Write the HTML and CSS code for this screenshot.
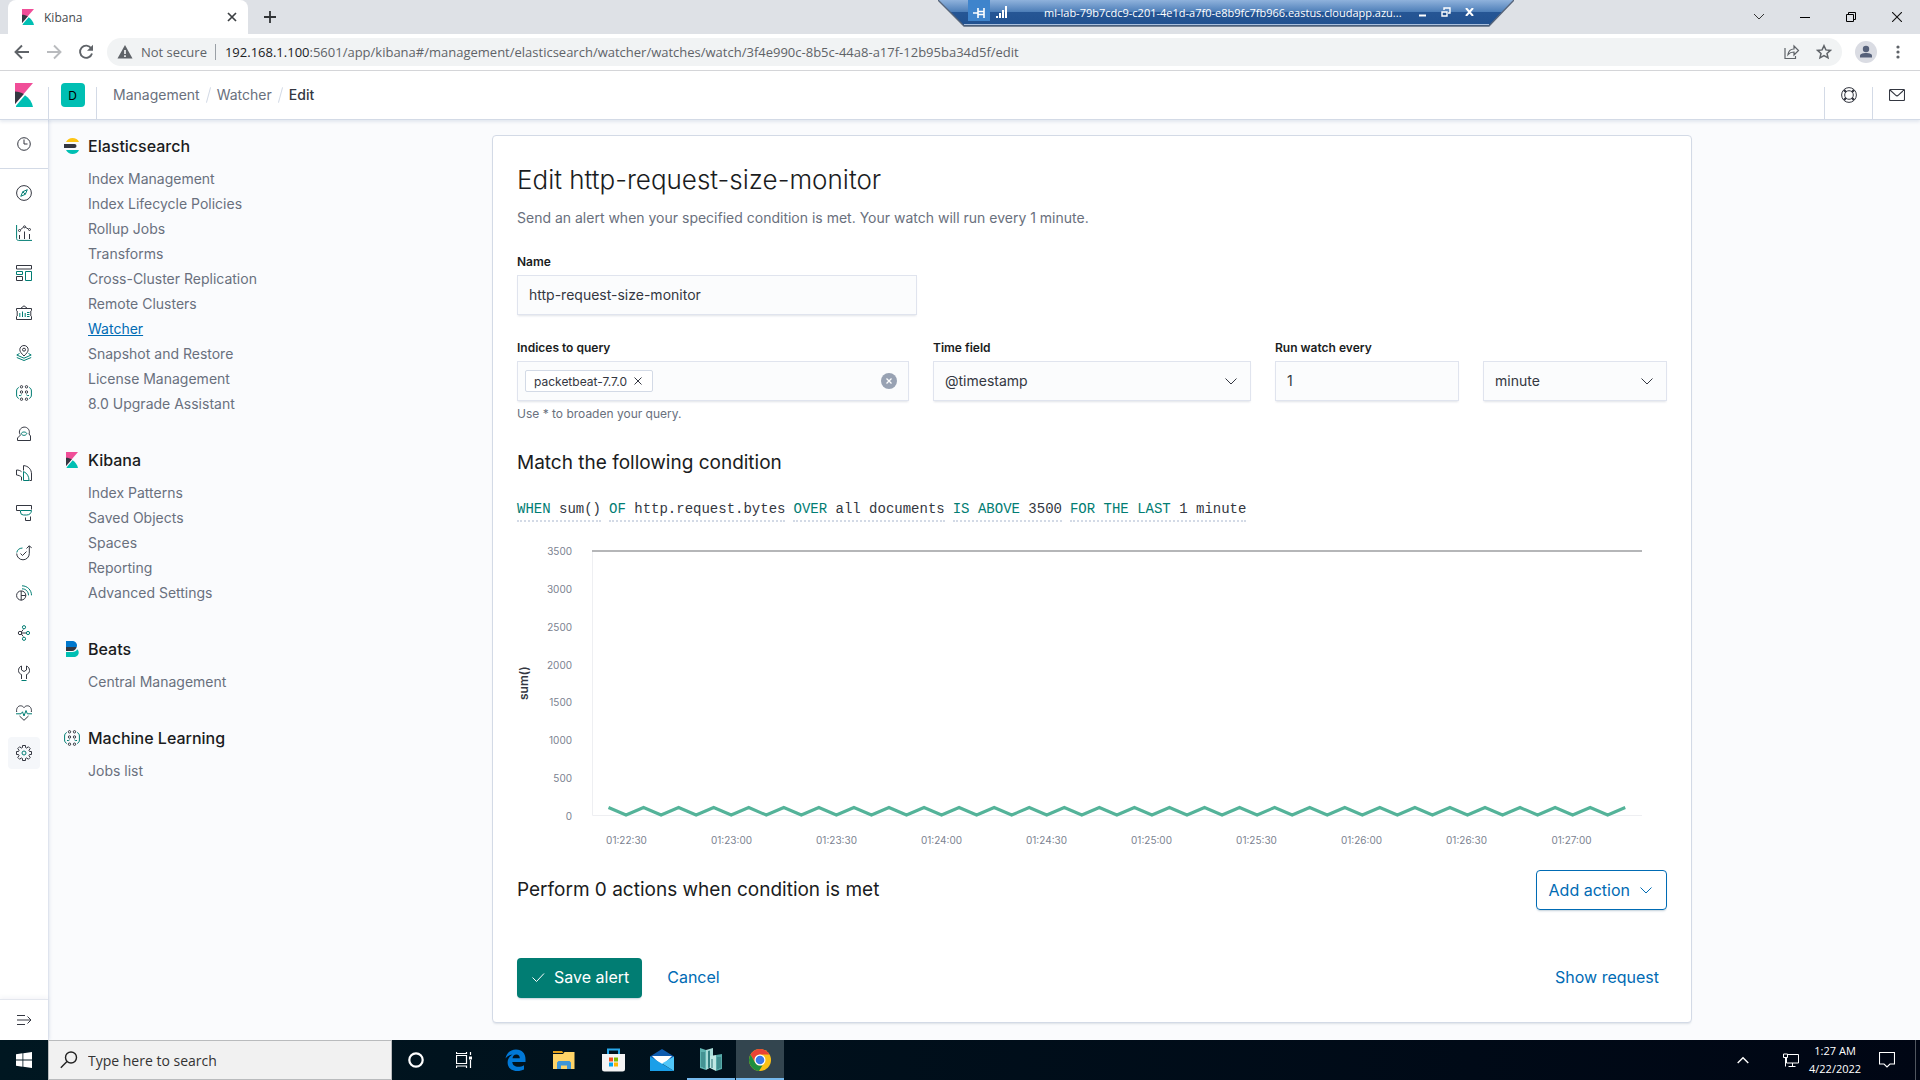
FILE: index.html
```html
<!DOCTYPE html>
<html lang="en">
<head>
<meta charset="utf-8">
<title>Kibana</title>
<link rel="stylesheet" href="styles.css">
</head>
<body>
<svg class="defs" aria-hidden="true">
  <symbol id="kibana" viewBox="0 0 18 24"><path fill="#f04e98" d="M0 0h18L0 21z"/><path fill="#343741" d="M0 8.500c3.200 0 6.200.9 8.800 2.400L0 21z"/><path fill="#00bfb3" d="M10 12.200 1 22.700V24h17c-.9-4.900-3.900-9.100-8-11.800z"/></symbol>
  <symbol id="chev" viewBox="0 0 16 16"><path d="M2.500 5.500 8 11l5.500-5.500" fill="none" stroke="currentColor"/></symbol>
  <symbol id="ml" viewBox="0 0 16 16"><g fill="none" stroke="#343741"><circle cx="5.500" cy="1.800" r="1.200"/><circle cx="10.500" cy="1.800" r="1.200"/><circle cx="5.500" cy="7" r="1.200"/><circle cx="10.500" cy="7" r="1.200"/><circle cx="5.500" cy="14.200" r="1.200"/><circle cx="10.500" cy="14.200" r="1.200"/></g><path fill="none" stroke="#017d73" d="M2.800 2.500C1.200 3.200.6 4.400.6 6v4c0 1.600.7 2.800 2.200 3.500M13.200 2.500c1.600.7 2.200 1.900 2.200 3.500v4c0 1.600-.7 2.800-2.200 3.500M3 10.500h1.700l1-.8M13 10.500h-1.700l-1-.8"/></symbol>
</svg>

<div class="tabstrip">
  <div class="tab">
    <svg class="fav"><use href="#kibana"/></svg>
    <span class="tab-name">Kibana</span>
    <button class="plain" aria-label="Close tab"><svg width="10" height="10" viewBox="0 0 10 10"><path d="m1 1 8 8M9 1 1 9" stroke="#3c4043" stroke-width="1.700"/></svg></button>
  </div>
  <button class="plain newtab" aria-label="New tab"><svg width="12" height="12" viewBox="0 0 12 12"><path d="M6 0v12M0 6h12" stroke="#303336" stroke-width="1.800"/></svg></button>
  <div class="winbtns">
    <button class="plain" aria-label="Search tabs"><svg width="12" height="12" viewBox="0 0 12 12"><path d="m1 3 5 5 5-5" fill="none" stroke="#333"/></svg></button>
    <button class="plain" aria-label="Minimize"><svg width="10" height="10" viewBox="0 0 10 10"><path d="M0 5.500h10" stroke="#000"/></svg></button>
    <button class="plain" aria-label="Restore"><svg width="10" height="10" viewBox="0 0 10 10"><path d="M.5 2.500h7v7h-7zM2.500 2V.5h7v7H8" fill="none" stroke="#000"/></svg></button>
    <button class="plain" aria-label="Close"><svg width="10" height="10" viewBox="0 0 10 10"><path d="m0 0 10 10M10 0 0 10" stroke="#111" stroke-width="1.100"/></svg></button>
  </div>
</div>

<div class="rdp">
  <svg class="rdp-shape" viewBox="0 0 576 27"><defs><linearGradient id="rg" x2="0" y2="1"><stop offset="0" stop-color="#8fb2dc"/><stop offset=".46" stop-color="#4d7eb8"/><stop offset=".46" stop-color="#265695"/><stop offset="1" stop-color="#20508f"/></linearGradient></defs><path d="M0 0h576l-25 26H26z" fill="url(#rg)"/><path d="M26 24.500h525" stroke="#a9bfdd" stroke-width="1"/><path d="m0 0 26 26h525l25-26" fill="none" stroke="#56647a" stroke-width="1.300"/></svg>
  <div class="rdp-row">
    <button class="plain pin" aria-label="Pin"><svg width="12" height="10" viewBox="0 0 12 10"><path d="M0 5h5M5 0v10M11 0v10M5 3.500h6M5 6.500h6" stroke="#fff" stroke-width="1.600"/></svg></button>
    <svg width="12" height="12" viewBox="0 0 12 12" fill="#fff"><path d="M0 10h2v2H0zM3 7h2v5H3zM6 4h2v8H6zM9 0h2v12H9z"/></svg>
    <span class="rdp-name">ml-lab-79b7cdc9-c201-4e1d-a7f0-e8b9fc7fb966.eastus.cloudapp.azu...</span>
    <button class="plain" aria-label="Minimize session"><svg width="9" height="10" viewBox="0 0 9 10"><path d="M1 8.500h7" stroke="#fff" stroke-width="2"/></svg></button>
    <button class="plain" aria-label="Restore session"><svg width="10" height="10" viewBox="0 0 10 10"><path d="M1 5h5v4H1zM3 3V1h6v5H7" fill="none" stroke="#fff" stroke-width="1.400"/></svg></button>
    <button class="plain" aria-label="Close session"><svg width="9" height="8" viewBox="0 0 9 8"><path d="m1 0 7 8M8 0 1 8" stroke="#fff" stroke-width="2"/></svg></button>
  </div>
</div>

<div class="toolbar">
  <div class="nav">
    <button class="plain" aria-label="Back"><svg width="16" height="16" viewBox="0 0 16 16"><path d="M15 8H2M8 1.500 1.500 8 8 14.500" fill="none" stroke="#5f6368" stroke-width="1.900"/></svg></button>
    <button class="plain" aria-label="Forward"><svg width="16" height="16" viewBox="0 0 16 16"><path d="M1 8h13M8 1.500 14.500 8 8 14.500" fill="none" stroke="#b9bbbe" stroke-width="1.900"/></svg></button>
    <button class="plain" aria-label="Reload"><svg width="16" height="16" viewBox="0 0 16 16"><path d="M13.200 4.300A6.100 6.100 0 1 0 14 9.500" fill="none" stroke="#5f6368" stroke-width="1.900"/><path d="M15 .8v6H9z" fill="#5f6368"/></svg></button>
  </div>
  <div class="pill">
    <svg width="16" height="14" viewBox="0 0 16 14"><path d="M8 0 .5 13.500h15z" fill="#5f6368"/><path d="M8 5v4M8 10.300v1.700" stroke="#f1f3f4" stroke-width="1.700"/></svg>
    <span class="notsec">Not secure</span>
    <span class="url"><b>192.168.1.100</b>:5601/app/kibana#/management/elasticsearch/watcher/watches/watch/3f4e990c-8b5c-44a8-a17f-12b95ba34d5f/edit</span>
    <svg width="16" height="16" viewBox="0 0 16 16"><path d="M1 4v10.500h10.500V12M4 10.500C4.500 7 6.500 5 10 5V2l4.500 4.500L10 11V8C7.500 8 5.500 8.800 4 10.500z" fill="none" stroke="#5f6368" stroke-width="1.200"/></svg>
    <svg width="16" height="16" viewBox="0 0 16 16"><path d="m8 1.700 1.900 4.200 4.500.5L11 9.400l1 4.400L8 11.500l-4 2.300 1-4.400-3.400-3 4.500-.5z" fill="none" stroke="#5f6368" stroke-width="1.500"/></svg>
  </div>
  <svg width="22" height="22" viewBox="0 0 22 22"><circle cx="11" cy="11" r="11" fill="#dadce3"/><circle cx="11" cy="8" r="3.200" fill="#56617a"/><path d="M5 16.500v-1.800C5 12.800 8 12 11 12s6 .8 6 2.700v1.800z" fill="#56617a"/></svg>
  <button class="plain" aria-label="Menu"><svg width="16" height="16" viewBox="0 0 16 16" fill="#5f6368"><circle cx="8" cy="3" r="1.600"/><circle cx="8" cy="8" r="1.600"/><circle cx="8" cy="13" r="1.600"/></svg></button>
</div>

<header class="khead">
  <a href="#" class="klogo" aria-label="Home"><svg width="18" height="24"><use href="#kibana"/></svg></a>
  <div class="kcell"><button class="space">D</button></div>
  <nav class="crumbs"><a href="#">Management</a><i></i><a href="#">Watcher</a><i></i><span>Edit</span></nav>
  <button class="plain kcell" aria-label="Help"><svg width="16" height="16" viewBox="0 0 16 16"><g fill="none" stroke="#343741"><circle cx="8" cy="8" r="7.400"/><circle cx="8" cy="8" r="4.300"/><path d="m3 3 2 2M13 3l-2 2M3 13l2-2M13 13l-2-2" stroke-width="2.400"/></g></svg></button>
  <button class="plain kcell" aria-label="News"><svg width="16" height="12" viewBox="0 0 16 12"><path d="M1.500.5h13a1 1 0 0 1 1 1v9a1 1 0 0 1-1 1h-13a1 1 0 0 1-1-1v-9a1 1 0 0 1 1-1zM1 1l5.600 5.200a2 2 0 0 0 2.800 0L15 1" fill="none" stroke="#343741" stroke-width="1.100"/></svg></button>
</header>

<div class="app">
  <nav class="rail">
    <a href="#" class="recent" aria-label="Recently viewed"><svg viewBox="0 0 16 16"><path d="M8 3.500V8h3.500"/><circle cx="8" cy="8" r="6.300"/></svg></a>
    <div class="rail-list">
      <a href="#" aria-label="Discover"><svg viewBox="0 0 16 16"><circle cx="8" cy="8" r="7.400"/><path class="t" d="m11.300 4.700-4.500 2-2 4.600 4.500-2zM6.800 6.700l2.500 2.600"/></svg></a>
      <a href="#" aria-label="Visualize"><svg viewBox="0 0 16 16"><path class="t" d="M.6 0v13.500c0 1.200.7 1.900 1.900 1.900H16"/><path d="M3.500 10v4M8.500 6.500V14M13.500 9v5M4.300 4.800l3.200-2.600M9.300 2.200l3.200 1.900"/><circle cx="3.500" cy="5.500" r="1"/><circle cx="8.500" cy="1.800" r="1"/><circle cx="13.500" cy="4.500" r="1"/></svg></a>
      <a href="#" aria-label="Dashboard"><svg viewBox="0 0 16 16"><path d="M.5.500h15v3.500H.5zM.5 11.500h6v4h-6z"/><path class="t" d="M.5 6.500h6v3h-6zM9.500 6.500h6v9h-6z"/></svg></a>
      <a href="#" aria-label="Canvas"><svg viewBox="0 0 16 16"><path d="M.5 3.500h15v2l-.7.500v5l.7.500v3H.5v-3l.7-.5V6l-.7-.5zM4.500 3.500 8 .8l3.500 2.700"/><path class="t" d="M3.800 8v4M6.500 6.500V12M9.200 8v4M11 7.500h2.500M11 9.500h2.500M11 11.500h2.500"/></svg></a>
      <a href="#" aria-label="Maps"><svg viewBox="0 0 16 16"><path d="M8 11C5.500 8.500 3.800 6.700 3.800 4.700a4.200 4.200 0 0 1 8.400 0C12.200 6.700 10.500 8.500 8 11z"/><circle cx="8" cy="4.700" r="1.500"/><path class="t" d="M3.500 8.500.8 10 8 13.200 15.200 10l-2.700-1.500M.8 12.500 8 15.500l7.200-3"/></svg></a>
      <a href="#" aria-label="Machine Learning"><svg><use href="#ml"/></svg></a>
      <a href="#" aria-label="Metrics"><svg viewBox="0 0 16 16"><path d="M4 9.500A5 5 0 1 1 13 9l1.500 2v4.500h-13V13L5 9.500"/><path class="t" d="M5.300 8.500C6 6.500 10 6.500 10.800 8.500 10 11 6 11 5.300 8.500z"/></svg></a>
      <a href="#" aria-label="Logs"><svg viewBox="0 0 16 16"><path d="M5.500 15.500V12C4 10.800 2.500 10.200.5 10V5c2 0 3.700.5 5 1.700M7.500 5.500V.6c4.800.3 8 3.700 8 8.400v6.500h-2"/><path class="t" d="M7.500 6.500v9h5.500c0-4-1.700-7.300-5.500-9z"/></svg></a>
      <a href="#" aria-label="APM"><svg viewBox="0 0 16 16"><path d="M4 5.500H.5v-5h15v4M9.500 12.500v3h5v-4"/><path class="t" d="M4.500 5.500h11c-.3 3-2.200 4.500-5 4.500h-3a3 3 0 0 1-3-3z"/></svg></a>
      <a href="#" aria-label="Uptime"><svg viewBox="0 0 16 16"><path d="M.7 8.500a6.300 6.300 0 0 0 12.600 0V1M10.500 3.500 13.300.7l2.500 2.500M4.500 8.500 6.500 10.500l4-4"/><path class="t" d="M.8 7.500C1.300 5 3 3.200 6.500 3"/></svg></a>
      <a href="#" aria-label="SIEM"><svg viewBox="0 0 16 16"><circle cx="5.200" cy="10.500" r="4.600"/><path d="M5.200 6v9.400M5.200 10.500h4.500"/><path class="t" d="M6 3.800c4 0 6.500 3 6.500 6.500M6 .8c5.500 0 9.500 4.400 9.500 9.500"/></svg></a>
      <a href="#" aria-label="Graph"><svg viewBox="0 0 16 16"><circle cx="4" cy="8" r="1.700"/><path d="M5.700 8h5M5.300 7l2-2.500M5.300 9l2 2.500"/><g class="t"><circle cx="8" cy="2.200" r="1.600"/><circle cx="12" cy="8" r="1.600"/><circle cx="8" cy="13.800" r="1.600"/></g></svg></a>
      <a href="#" aria-label="Dev Tools"><svg viewBox="0 0 16 16"><path d="M5.500 1C3.500 1.800 2.500 3.500 2.500 5.500s1 3.200 3 4V14M10.500 1c2 .8 3 2.500 3 4.500s-1 3.200-3 4V14M5.500 1v4L8 6.500 10.500 5V1"/><path class="t" d="M5.500 15.500h5"/></svg></a>
      <a href="#" aria-label="Stack Monitoring"><svg viewBox="0 0 16 16"><path d="M.7 7C0 3.500 2 .8 4.500.8 6 .8 7.200 1.500 8 2.600 8.800 1.500 10 .8 11.500.8c2.500 0 4.500 2.700 3.800 6.200M3.500 11 8 15.300 12.500 11"/><path class="t" d="M0 8.800h5l1.500-2L8 11l2-5.500 1.300 3.300H16"/></svg></a>
      <a href="#" class="on" aria-label="Management"><svg viewBox="0 0 16 16"><path d="M6.500.5h3v2l1.300.6L12.300 1.700l2 2-1.400 1.500.6 1.300h2v3h-2l-.6 1.300 1.400 1.500-2 2-1.500-1.400-1.300.6v2h-3v-2l-1.300-.6-1.500 1.400-2-2 1.400-1.500-.6-1.300h-2v-3h2l.6-1.300-1.400-1.500 2-2 1.500 1.400 1.300-.6z"/><circle class="t" cx="8" cy="8" r="2"/></svg></a>
    </div>
    <a href="#" class="expand" aria-label="Expand"><svg viewBox="0 0 16 16"><path d="M1 3.500h8M1 8h14M1 12.500h8M11.500 4.500 15 8l-3.500 3.500"/></svg></a>
  </nav>

  <nav class="side">
    <h2><svg viewBox="0 0 16 16"><path fill="#fec514" d="M2 4C3.500 1.500 5.700 0 8.500 0 11.500 0 14 1.500 15 4z"/><path fill="#343741" d="M0 6h10.500a2 2 0 0 1 0 4H0z"/><path fill="#00bfb3" d="M2 12h13c-1 2.500-3.500 4-6.500 4C5.700 16 3.500 14.500 2 12z"/></svg>Elasticsearch</h2>
    <ul>
      <li><a href="#">Index Management</a></li><li><a href="#">Index Lifecycle Policies</a></li><li><a href="#">Rollup Jobs</a></li><li><a href="#">Transforms</a></li><li><a href="#">Cross-Cluster Replication</a></li><li><a href="#">Remote Clusters</a></li><li><a href="#" class="cur">Watcher</a></li><li><a href="#">Snapshot and Restore</a></li><li><a href="#">License Management</a></li><li><a href="#">8.0 Upgrade Assistant</a></li>
    </ul>
    <h2><svg><use href="#kibana"/></svg>Kibana</h2>
    <ul>
      <li><a href="#">Index Patterns</a></li><li><a href="#">Saved Objects</a></li><li><a href="#">Spaces</a></li><li><a href="#">Reporting</a></li><li><a href="#">Advanced Settings</a></li>
    </ul>
    <h2><svg viewBox="0 0 16 16"><path fill="#0077cc" d="M2 0h6c3 0 5 2 5 4.500 0 .6-.1 1-.3 1.500H2z"/><path fill="#343741" d="M2 6h10.700c-.7 2-2.300 4-4.700 4H2z"/><path fill="#00bfb3" d="M2 11h6.500c2.200 0 3.800-1 4.700-2.700 1 .8 1.500 2 1.500 3.200 0 2.500-2 4.500-5 4.500H2z"/></svg>Beats</h2>
    <ul><li><a href="#">Central Management</a></li></ul>
    <h2><svg><use href="#ml"/></svg>Machine Learning</h2>
    <ul><li><a href="#">Jobs list</a></li></ul>
  </nav>

  <main class="main">
    <form class="panel">
      <h1>Edit http-request-size-monitor</h1>
      <p class="sub">Send an alert when your specified condition is met. Your watch will run every 1 minute.</p>
      <div class="field name"><label for="name">Name</label><input class="ctl" id="name" value="http-request-size-monitor"></div>
      <div class="row">
        <div class="field">
          <label for="idx">Indices to query</label>
          <div class="ctl combo">
            <span class="badge">packetbeat-7.7.0<button type="button" class="plain" aria-label="Remove packetbeat-7.7.0"><svg width="8" height="8" viewBox="0 0 8 8"><path d="m.5.500 7 7M7.500.500l-7 7" stroke="#343741"/></svg></button></span>
            <input id="idx">
            <button type="button" class="plain" aria-label="Clear"><svg width="16" height="16" viewBox="0 0 16 16"><circle cx="8" cy="8" r="8" fill="#98a2b3"/><path d="m5.500 5.500 5 5M10.500 5.500l-5 5" stroke="#fff" stroke-width="1.300"/></svg></button>
          </div>
          <p class="help">Use * to broaden your query.</p>
        </div>
        <div class="field"><label for="time">Time field</label><div class="sel"><select class="ctl" id="time"><option>@timestamp</option></select><svg><use href="#chev"/></svg></div></div>
        <div class="field"><label for="every">Run watch every</label><input class="ctl" id="every" value="1"></div>
        <div class="field bottomless"><div class="sel"><select class="ctl" aria-label="Unit"><option>minute</option></select><svg><use href="#chev"/></svg></div></div>
      </div>
      <h2>Match the following condition</h2>
      <div class="expr">
        <button type="button"><b>WHEN</b> sum()</button><button type="button"><b>OF</b> http.request.bytes</button><button type="button"><b>OVER</b> all documents</button><button type="button"><b>IS ABOVE</b> 3500</button><button type="button"><b>FOR THE LAST</b> 1 minute</button>
      </div>
      <div class="chart">
        <div class="ytitle">sum()</div>
        <div class="ylab"><span>3500</span><span>3000</span><span>2500</span><span>2000</span><span>1500</span><span>1000</span><span>500</span><span>0</span></div>
        <svg class="plot" viewBox="0 0 1050 265" preserveAspectRatio="none"><g fill="none"><path d="M.5 0v264.500H1050" stroke="#eeeff2" vector-effect="non-scaling-stroke"/><path d="M0 0h1050" stroke="#b5b6b8" stroke-width="2" vector-effect="non-scaling-stroke"/><path id="series" stroke="#54b399" stroke-width="3" vector-effect="non-scaling-stroke"/></g></svg>
        <div class="xlab"><span>01:22:30</span><span>01:23:00</span><span>01:23:30</span><span>01:24:00</span><span>01:24:30</span><span>01:25:00</span><span>01:25:30</span><span>01:26:00</span><span>01:26:30</span><span>01:27:00</span></div>
      </div>
      <div class="actions">
        <h2>Perform 0 actions when condition is met</h2>
        <button type="button" class="btn outline">Add action<svg><use href="#chev"/></svg></button>
      </div>
      <div class="foot">
        <button type="button" class="btn fill"><svg viewBox="0 0 16 16"><path d="m2.500 8.500 4 4 7.500-8" fill="none" stroke="#fff"/></svg>Save alert</button>
        <button type="button" class="btn link">Cancel</button>
        <button type="button" class="btn link last">Show request</button>
      </div>
    </form>
  </main>
</div>

<footer class="taskbar">
  <button class="plain start" aria-label="Start"><svg width="16" height="16" viewBox="0 0 16 16" fill="#fff"><path d="M0 2.200 6.500 1.300V7.600H0zM7.300 1.200 16 0v7.600H7.300zM0 8.400h6.500v6.300L0 13.800zM7.300 8.400H16V16l-8.700-1.200z"/></svg></button>
  <label class="search"><svg width="18" height="18" viewBox="0 0 18 18"><g fill="none" stroke="#222" stroke-width="1.400"><circle cx="11" cy="6.500" r="5.500"/><path d="M7 10.500.8 16.800"/></g></svg><input placeholder="Type here to search" aria-label="Search"></label>
  <button class="plain tb" aria-label="Cortana"><svg width="16" height="16" viewBox="0 0 16 16"><circle cx="8" cy="8" r="6.700" fill="none" stroke="#fff" stroke-width="2.200"/></svg></button>
  <button class="plain tb" aria-label="Task View"><svg width="16" height="16" viewBox="0 0 16 16"><path d="M.5 3.500h10v8H.5zM.5 0v1.500h10V0M.5 16v-2h10v2M14.500 0v3M14.500 8v8" fill="none" stroke="#fff" stroke-width="1.200"/><path d="M13 4.500h3v3h-3z" fill="#fff"/></svg></button>
  <div class="apps">
    <button class="plain tb" aria-label="Edge"><svg width="21" height="22" viewBox="0 0 21 22"><path fill="#0078d7" d="M.5 9.500C1.500 4 5.500.5 11 .5c6 0 9.500 4 9.500 9.500v3H7.300c.2 3.200 2.700 4.800 6 4.800 2.200 0 4-.6 5.700-1.600v4.300c-1.700.9-4 1.500-6.800 1.500-6 0-9.600-3.500-9.600-8.500 0-3.500 2-6.500 5-8C4.500 6 2 7.200.5 9.500zM7.500 9.300h7.300c0-2.300-1.200-3.800-3.500-3.800-2.200 0-3.500 1.600-3.800 3.800z"/></svg></button>
    <button class="plain tb" aria-label="File Explorer"><svg width="22" height="18" viewBox="0 0 22 18"><path fill="#e3a01b" d="M0 0h9l1.500 2H0z"/><path fill="#ffd467" d="M0 3h10l1.500-2H21.500v17H0z"/><path fill="#3f96d8" d="M4 18v-6.500L5.500 10h11L18 11.500V18h-4v-3.500H8V18z"/></svg></button>
    <button class="plain tb" aria-label="Store"><svg width="23" height="24" viewBox="0 0 23 24"><path d="M6 6V1.500h11V6" fill="none" stroke="#28a8ea" stroke-width="2"/><path fill="#f4f4f4" d="M0 6h23v15a2.500 2.500 0 0 1-2.500 2.500h-18A2.500 2.500 0 0 1 0 21z"/><path fill="#f25022" d="M7 9.500h4v4H7z"/><path fill="#7fba00" d="M12 9.500h4v4h-4z"/><path fill="#00a4ef" d="M7 14.500h4v4H7z"/><path fill="#ffb900" d="M12 14.500h4v4h-4z"/></svg></button>
    <button class="plain tb" aria-label="Mail"><svg width="24" height="22" viewBox="0 0 24 22"><path fill="#0d5bae" d="M0 7.500 12 0l12 7.500V12H0z"/><path fill="#fff" d="M2 7h20l-8 8h-4z"/><path fill="#1a9fe8" d="M0 7.500 24 22H0z"/><path fill="#4fc6f8" d="M24 7.500V22L12 14.500z"/></svg></button>
    <button class="plain tb under" aria-label="Server Manager"><svg width="24" height="24" viewBox="0 0 24 24"><path fill="#5fb3b0" d="m1 0 6 2v20l-6-2z"/><path fill="#a9dcd8" d="m7 2 7-2v18l-7 4z"/><path fill="#347f80" d="m9 3 2-.5v17L9 20z"/><path fill="#bfe8e4" d="m11 8 6-1v16l-6-3z"/><path fill="#57aaa8" d="m17 7 6-1v15l-6 2z"/><path stroke="#2b7376" d="M3 4v15M5 4v16M13 11v9M19 9v12M21 9v11"/></svg></button>
    <button class="plain tb active under" aria-label="Chrome"><svg width="22" height="22" viewBox="0 0 22 22"><circle cx="11" cy="11" r="11" fill="#fbc116"/><path fill="#ea4335" d="M1.500 5.500a11 11 0 0 1 19 0H11a5.500 5.500 0 0 0-4.800 8.200z"/><path fill="#1e8e3e" d="M1.500 5.500 6.200 13.700A5.500 5.500 0 0 0 11 16.500h2.500L10 22A11 11 0 0 1 1.500 5.500z"/><circle cx="11" cy="11" r="5.500" fill="#fff"/><circle cx="11" cy="11" r="4.300" fill="#3b78e7"/></svg></button>
  </div>
  <div class="tray">
    <svg width="12" height="8" viewBox="0 0 12 8"><path d="m.7 7 5.300-5.300L11.300 7" fill="none" stroke="#fff" stroke-width="1.400"/></svg>
    <svg class="net" width="16" height="14" viewBox="0 0 16 14"><path d="M4 1.500h11.500v8.500H3.500V5M9.500 10v3M5.500 13.500h7M.5 1h4v3.500h-4zM2.500 4.500V13.500" fill="none" stroke="#fff"/></svg>
    <div class="clock"><span>1:27 AM</span><span>4/22/2022</span></div>
    <svg width="16" height="16" viewBox="0 0 16 16"><path d="M.5.500h15v11.500H11L8 15l-3-3H.5z" fill="none" stroke="#fff" stroke-width="1.100"/></svg>
    <i class="desk"></i>
  </div>
</footer>
<script src="chart.js"></script>
</body>
</html>
```
FILE: styles.css
```css
* { box-sizing: border-box; }
body { margin: 0; min-height: 100vh; display: flex; flex-direction: column; background: #fafbfd; font-family: Inter, "Open Sans", sans-serif; font-size: 14px; color: #343741; }
h1, h2, p, ul { margin: 0; padding: 0; font-weight: 400; }
ul { list-style: none; }
a { text-decoration: none; color: inherit; }
button, input, select { font: inherit; color: inherit; }
svg { display: block; flex: none; }
.defs { position: absolute; width: 0; height: 0; }
.plain { border: 0; background: none; padding: 0; display: grid; place-items: center; }

/* browser chrome */
.tabstrip { height: 34px; background: #dee1e6; display: flex; align-items: center; padding-left: 8px; }
.tab { width: 240px; height: 34px; background: #fff; border-radius: 8px 8px 0 0; display: flex; align-items: center; padding: 0 11px 0 13px; gap: 9px; font-family: "Open Sans", sans-serif; font-size: 12px; color: #45494d; }
.fav { width: 14px; height: 16px; }
.tab-name { flex: 1; }
.newtab { margin-left: 16px; }
.winbtns { margin-left: auto; display: flex; height: 28px; }
.winbtns .plain { width: 46px; }
.toolbar { height: 37px; background: #fff; border-bottom: 1px solid #d5d6d9; display: flex; align-items: center; gap: 13px; padding: 0 14px; }
.nav { display: flex; gap: 16px; }
.pill { flex: 1; height: 28px; border-radius: 14px; background: #f1f3f4; display: flex; align-items: center; gap: 16px; padding: 0 10px; color: #5f6368; font-family: "Open Sans", sans-serif; font-size: 13px; }
.notsec { margin: 0 -7px 0 -8px; padding-right: 8px; line-height: 16px; border-right: 1px solid #9aa0a6; }
.url { flex: 1; white-space: nowrap; overflow: hidden; }
.url b { font-weight: 400; color: #202124; }

/* remote session bar */
.rdp { position: absolute; top: 0; left: 938px; width: 576px; height: 27px; }
.rdp-shape { position: absolute; width: 576px; height: 27px; }
.rdp-row { position: relative; height: 24px; display: flex; align-items: center; gap: 14px; padding: 0 40px 0 30px; color: #fff; font: 11px "Open Sans", sans-serif; }
.pin { width: 22px; height: 21px; margin-right: -8px; padding-top: 4px; align-self: flex-start; background: #3f84cc; }
.rdp-name { flex: 1; white-space: nowrap; padding-left: 22px; }

/* app header */
.khead { height: 49px; background: #fff; border-bottom: 1px solid #d3dae6; display: flex; align-items: center; box-shadow: 0 2px 3px rgba(60,90,140,.12); position: relative; }
.klogo { width: 48px; display: grid; place-items: center; }
.kcell, .crumbs { height: 48px; background: linear-gradient(#d3dae6, #d3dae6) left bottom / 1px 32px no-repeat; }
.kcell { width: 48px; padding-left: 1px; display: grid; place-items: center; }
.space { width: 24px; height: 24px; border: 0; border-radius: 4px; background: #00bfb3; color: #000; font-size: 12px; padding: 0; }
.crumbs { flex: 1; display: flex; align-items: center; padding: 0 0 1px 17px; gap: 8px; color: #69707d; }
.crumbs i { width: 1px; height: 16px; background: #d3dae6; transform: rotate(15deg); }
.crumbs span { font-weight: 500; color: #343741; }

.app { flex: 1; display: flex; }
.rail { width: 49px; flex: none; background: #fff; border-right: 1px solid #dfe4ee; box-shadow: 1px 0 3px rgba(60,90,140,.1); display: flex; flex-direction: column; }
.rail a { display: grid; place-items: center; }
.rail svg { width: 16px; height: 16px; fill: none; stroke: #343741; }
.rail .t { stroke: #017d73; }
.recent { height: 49px; padding-bottom: 1px; border-bottom: 1px solid #d3dae6; }
.rail-list { display: grid; gap: 8px; padding: 8px; }
.rail-list a { height: 32px; border-radius: 4px; }
.rail-list .on { background: #f5f7fa; }
.expand { margin-top: auto; height: 41px; border-top: 1px solid #e4e7ee; box-shadow: 0 -2px 4px rgba(60,90,140,.06); }

.side { width: 231px; flex: none; padding: 16px 0 0 15px; color: #69707d; }
.side h2 { display: flex; gap: 8px; align-items: center; font-size: 16px; line-height: 20px; font-weight: 500; color: #1a1c21; margin-bottom: 10px; }
.side h2 svg { width: 16px; height: 16px; }
.side ul { margin-bottom: 34px; padding-left: 24px; }
.side li { line-height: 25px; }
.cur { color: #006bb4; text-decoration: underline; }

.main { flex: 1; padding: 15px 16px 17px 0; }
.panel { max-width: 1200px; margin: 0 auto; background: #fff; border: 1px solid #d3dae6; border-radius: 4px; padding: 24px; box-shadow: 0 2px 2px -1px rgba(152,162,179,.3); }
h1 { font-size: 26px; line-height: 40px; font-weight: 300; color: #1a1c21; margin-bottom: 8px; }
.sub { line-height: 20px; color: #69707d; margin-bottom: 25px; }
.field { display: flex; flex-direction: column; gap: 4px; }
.field label { font-size: 12px; line-height: 18px; font-weight: 600; color: #1a1c21; }
.name { max-width: 400px; margin-bottom: 24px; }
.row { display: grid; grid-template-columns: 392fr 318fr 184fr 184fr; gap: 24px; margin-bottom: 24px; }
.bottomless { padding-top: 22px; }
.ctl { width: 100%; height: 40px; border: 1px solid #e0e4ee; border-radius: 0; background: #fbfcfd; padding: 0 11px 2px; box-shadow: 0 2px 2px -1px rgba(152,162,179,.3); appearance: none; outline: 0; }
.combo { display: flex; align-items: center; padding: 0 11px 0 7px; }
.combo input { flex: 1; min-width: 0; border: 0; background: none; outline: 0; }
.badge { height: 22px; border: 1px solid #d3dae6; border-radius: 2px; background: #fff; font-size: 12px; display: flex; align-items: center; gap: 7px; padding: 0 10px 0 8px; }
.sel { display: grid; align-items: center; }
.sel > * { grid-area: 1 / 1; }
.sel svg { justify-self: end; width: 16px; height: 16px; margin-right: 12px; pointer-events: none; }
.help { font-size: 12px; line-height: 18px; color: #69707d; }
.panel h2 { font-size: 19px; line-height: 32px; color: #1a1c21; }
.expr { margin: 19px 0 29px; display: flex; flex-wrap: wrap; gap: 8px; }
.expr button { border: 0; border-bottom: 2px dotted #d3dae6; background: none; padding: 0; font: 14px/22px "Liberation Mono", monospace; }
.expr b { font-weight: 400; color: #017d73; }

.chart { display: grid; grid-template-columns: 14px 41px 1fr; grid-template-rows: 265px 16px; gap: 16px 0; margin-right: 25px; font-size: 10px; color: #7b8290; }
.ytitle { writing-mode: vertical-rl; transform: rotate(180deg); text-align: center; font-size: 12px; font-weight: 600; line-height: 14px; color: #343741; }
.ylab { display: flex; flex-direction: column; justify-content: space-between; text-align: right; }
.ylab span { line-height: 0; height: 0; }
.plot { width: calc(100% - 20px); height: 265px; margin-left: 20px; overflow: visible; }
.xlab { grid-column: 3; display: grid; grid-template-columns: repeat(10, 1fr); text-align: center; line-height: 16px; margin: 0 18px 0 2px; }

.actions { display: flex; justify-content: space-between; align-items: center; margin: 22px 0 48px; }
.btn { height: 40px; border: 0; border-radius: 4px; background: none; font-size: 16px; color: #006bb4; padding: 0 8px 2px; display: flex; align-items: center; gap: 8px; }
.btn svg { width: 16px; height: 16px; }
.outline { border: 1px solid #006bb4; padding: 0 12px; box-shadow: 0 2px 2px -1px rgba(54,97,126,.3); }
.fill { background: #017d73; color: #fff; padding: 0 13px 2px; box-shadow: 0 2px 2px -1px rgba(54,97,126,.3); }
.foot { display: flex; gap: 17px; }
.last { margin-left: auto; }

/* task bar */
.taskbar { height: 40px; background: linear-gradient(90deg, #001721, #000614); display: flex; font-family: "Open Sans", sans-serif; }
.start { width: 48px; }
.search { width: 344px; background: #f1f1f1; border: 1px solid #b9bbbd; display: flex; align-items: center; gap: 10px; padding-left: 11px; }
.search input { flex: 1; border: 0; background: none; padding: 0; font-size: 14px; outline: 0; }
.search input::placeholder { color: #333; opacity: 1; }
.tb { width: 48px; }
.apps { display: flex; gap: 1px; margin-left: 3px; }
.active { background: #33454f; }
.under { box-shadow: inset 0 -2px #76b9ed; }
.tray { margin-left: auto; display: flex; align-items: center; color: #fff; font-size: 11px; }
.net { margin: 0 10px 0 34px; }
.clock { width: 52px; display: grid; text-align: center; line-height: 18px; margin-right: 18px; white-space: nowrap; }
.desk { width: 1px; height: 40px; background: #50565f; margin: 0 4px 0 20px; }
```
FILE: chart.js
```js
// One sample every five seconds, alternating between about 100 bytes and zero.
var points = [];
for (var i = 0; i < 59; i++) {
  points.push((16.5 + i * 17.53).toFixed(2) + ',' + (i % 2 ? 264 : 256.5));
}
document.getElementById('series').setAttribute('d', 'M' + points.join('L'));
```
